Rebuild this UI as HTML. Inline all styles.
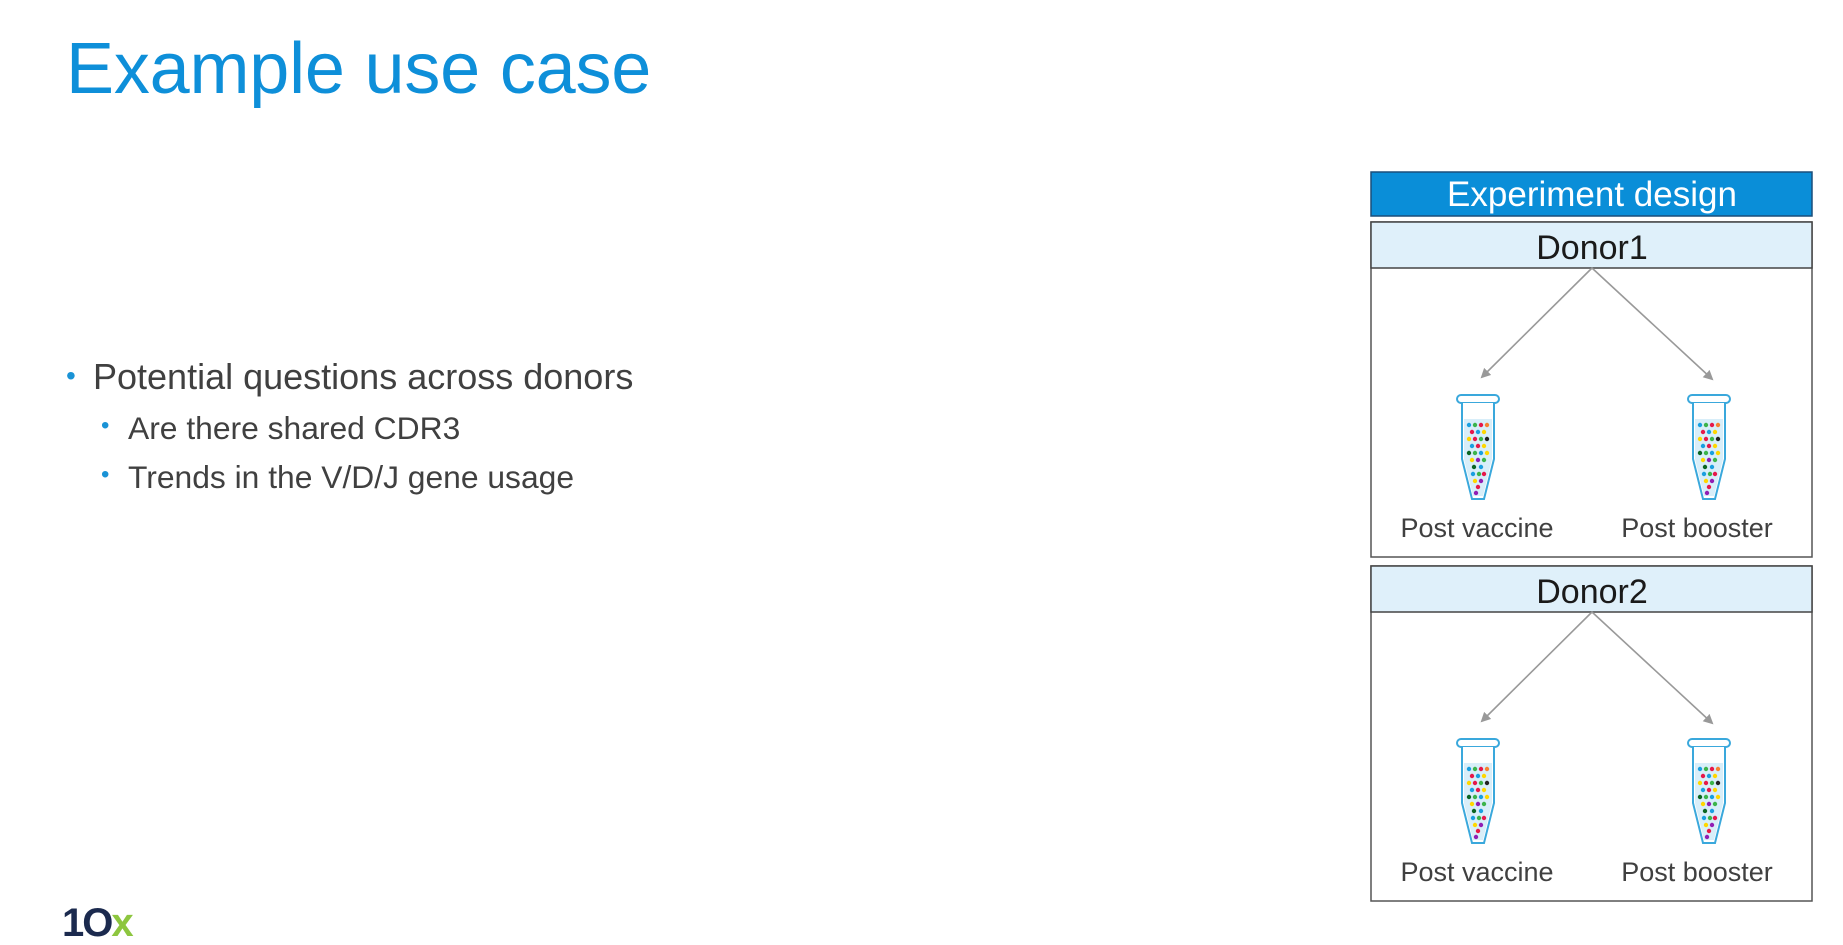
<!DOCTYPE html>
<html><head><meta charset="utf-8"><style>
html,body{margin:0;padding:0;background:#fff;width:1843px;height:923px;overflow:hidden;font-family:"Liberation Sans",Arial,sans-serif}
.t{position:absolute;left:66px;top:28px;font-size:72px;color:#0e8fd9;white-space:nowrap;letter-spacing:-0.2px}
.b{position:absolute;white-space:nowrap;color:#404040}
.b1{left:93px;top:356px;font-size:36px}
.b2{left:128px;top:410px;font-size:31.8px}
.b3{left:128px;top:459px;font-size:31.8px}
.dot{position:absolute;color:#1a93d6;}
</style></head><body>
<div class="t">Example use case</div>
<div class="dot" style="left:66px;top:360px;font-size:28px">•</div>
<div class="b b1">Potential questions across donors</div>
<div class="dot" style="left:101px;top:412px;font-size:24px">•</div>
<div class="b b2">Are there shared CDR3</div>
<div class="dot" style="left:101px;top:461px;font-size:24px">•</div>
<div class="b b3">Trends in the V/D/J gene usage</div>
<div style="position:absolute;left:62px;top:903px;font-size:40px;font-weight:bold;color:#1b2a4e;letter-spacing:-2px;line-height:40px">1O<span style="color:#8dc63f">x</span></div>
<svg width="1843" height="923" style="position:absolute;left:0;top:0" xmlns="http://www.w3.org/2000/svg">
<defs>
<marker id="ah" markerWidth="10" markerHeight="10" refX="8" refY="5" orient="auto" markerUnits="userSpaceOnUse"><path d="M0,0 L10,5 L0,10 Z" fill="#999"/></marker>
<g id="tube">
<rect x="-21" y="0" width="42" height="8" rx="4" fill="#fff" stroke="#3aa8dc" stroke-width="2"/>
<path d="M-16,8 L-16,64 L-6,104 L6,104 L16,64 L16,8" fill="#fff" stroke="#3aa8dc" stroke-width="2"/>
<path d="M-14,24 L14,24 L14,64 L5,101 L-5,101 L-14,64 Z" fill="#d8eef9"/>
<g>
<circle cx="-9" cy="30" r="2.2" fill="#1a9fe0"/><circle cx="-3" cy="30" r="2.2" fill="#3cb44b"/><circle cx="3" cy="30" r="2.2" fill="#e6194b"/><circle cx="9" cy="30" r="2.2" fill="#f58231"/>
<circle cx="-6" cy="37" r="2.2" fill="#e6194b"/><circle cx="0" cy="37" r="2.2" fill="#1a9fe0"/><circle cx="6" cy="37" r="2.2" fill="#ffd700"/>
<circle cx="-9" cy="44" r="2.2" fill="#ffd700"/><circle cx="-3" cy="44" r="2.2" fill="#e6194b"/><circle cx="3" cy="44" r="2.2" fill="#3cb44b"/><circle cx="9" cy="44" r="2.2" fill="#222"/>
<circle cx="-6" cy="51" r="2.2" fill="#1a9fe0"/><circle cx="0" cy="51" r="2.2" fill="#e6194b"/><circle cx="6" cy="51" r="2.2" fill="#ffd700"/>
<circle cx="-9" cy="58" r="2.2" fill="#0b6623"/><circle cx="-3" cy="58" r="2.2" fill="#3cb44b"/><circle cx="3" cy="58" r="2.2" fill="#1a9fe0"/><circle cx="9" cy="58" r="2.2" fill="#ffd700"/>
<circle cx="-6" cy="65" r="2.2" fill="#ffd700"/><circle cx="0" cy="65" r="2.2" fill="#911eb4"/><circle cx="6" cy="65" r="2.2" fill="#3cb44b"/>
<circle cx="-4" cy="72" r="2.2" fill="#0b6623"/><circle cx="3" cy="72" r="2.2" fill="#1a9fe0"/>
<circle cx="-5" cy="79" r="2.2" fill="#1a9fe0"/><circle cx="1" cy="79" r="2.2" fill="#3cb44b"/><circle cx="6" cy="79" r="2.2" fill="#e6194b"/>
<circle cx="-3" cy="86" r="2.2" fill="#ffd700"/><circle cx="3" cy="86" r="2.2" fill="#911eb4"/>
<circle cx="0" cy="92" r="2.2" fill="#e6194b"/>
<circle cx="-2" cy="98" r="2.2" fill="#911eb4"/>
</g>
</g>
<g id="donor">
<rect x="1371" y="0" width="441" height="335" fill="#fff" stroke="#555" stroke-width="1.5"/>
<rect x="1371" y="0" width="441" height="46" fill="#dff0fa" stroke="#444" stroke-width="1.5"/>
<line x1="1592" y1="46" x2="1482" y2="155" stroke="#999" stroke-width="1.6" marker-end="url(#ah)"/>
<line x1="1592" y1="46" x2="1712" y2="157" stroke="#999" stroke-width="1.6" marker-end="url(#ah)"/>
<use href="#tube" x="1478" y="173"/>
<use href="#tube" x="1709" y="173"/>
<text x="1477" y="315" font-size="27" fill="#404040" text-anchor="middle" font-family="Liberation Sans, Arial, sans-serif">Post vaccine</text>
<text x="1697" y="315" font-size="27" fill="#404040" text-anchor="middle" font-family="Liberation Sans, Arial, sans-serif">Post booster</text>
</g>
</defs>
<rect x="1371" y="172" width="441" height="44" fill="#0a8ed8" stroke="#1b4f7a" stroke-width="1.5"/>
<text x="1592" y="206" font-size="35" fill="#fff" text-anchor="middle" font-family="Liberation Sans, Arial, sans-serif">Experiment design</text>
<use href="#donor" x="0" y="222"/>
<text x="1592" y="259" font-size="34" fill="#1a1a1a" text-anchor="middle" font-family="Liberation Sans, Arial, sans-serif">Donor1</text>
<use href="#donor" x="0" y="566"/>
<text x="1592" y="603" font-size="34" fill="#1a1a1a" text-anchor="middle" font-family="Liberation Sans, Arial, sans-serif">Donor2</text>
</svg>
</body></html>
